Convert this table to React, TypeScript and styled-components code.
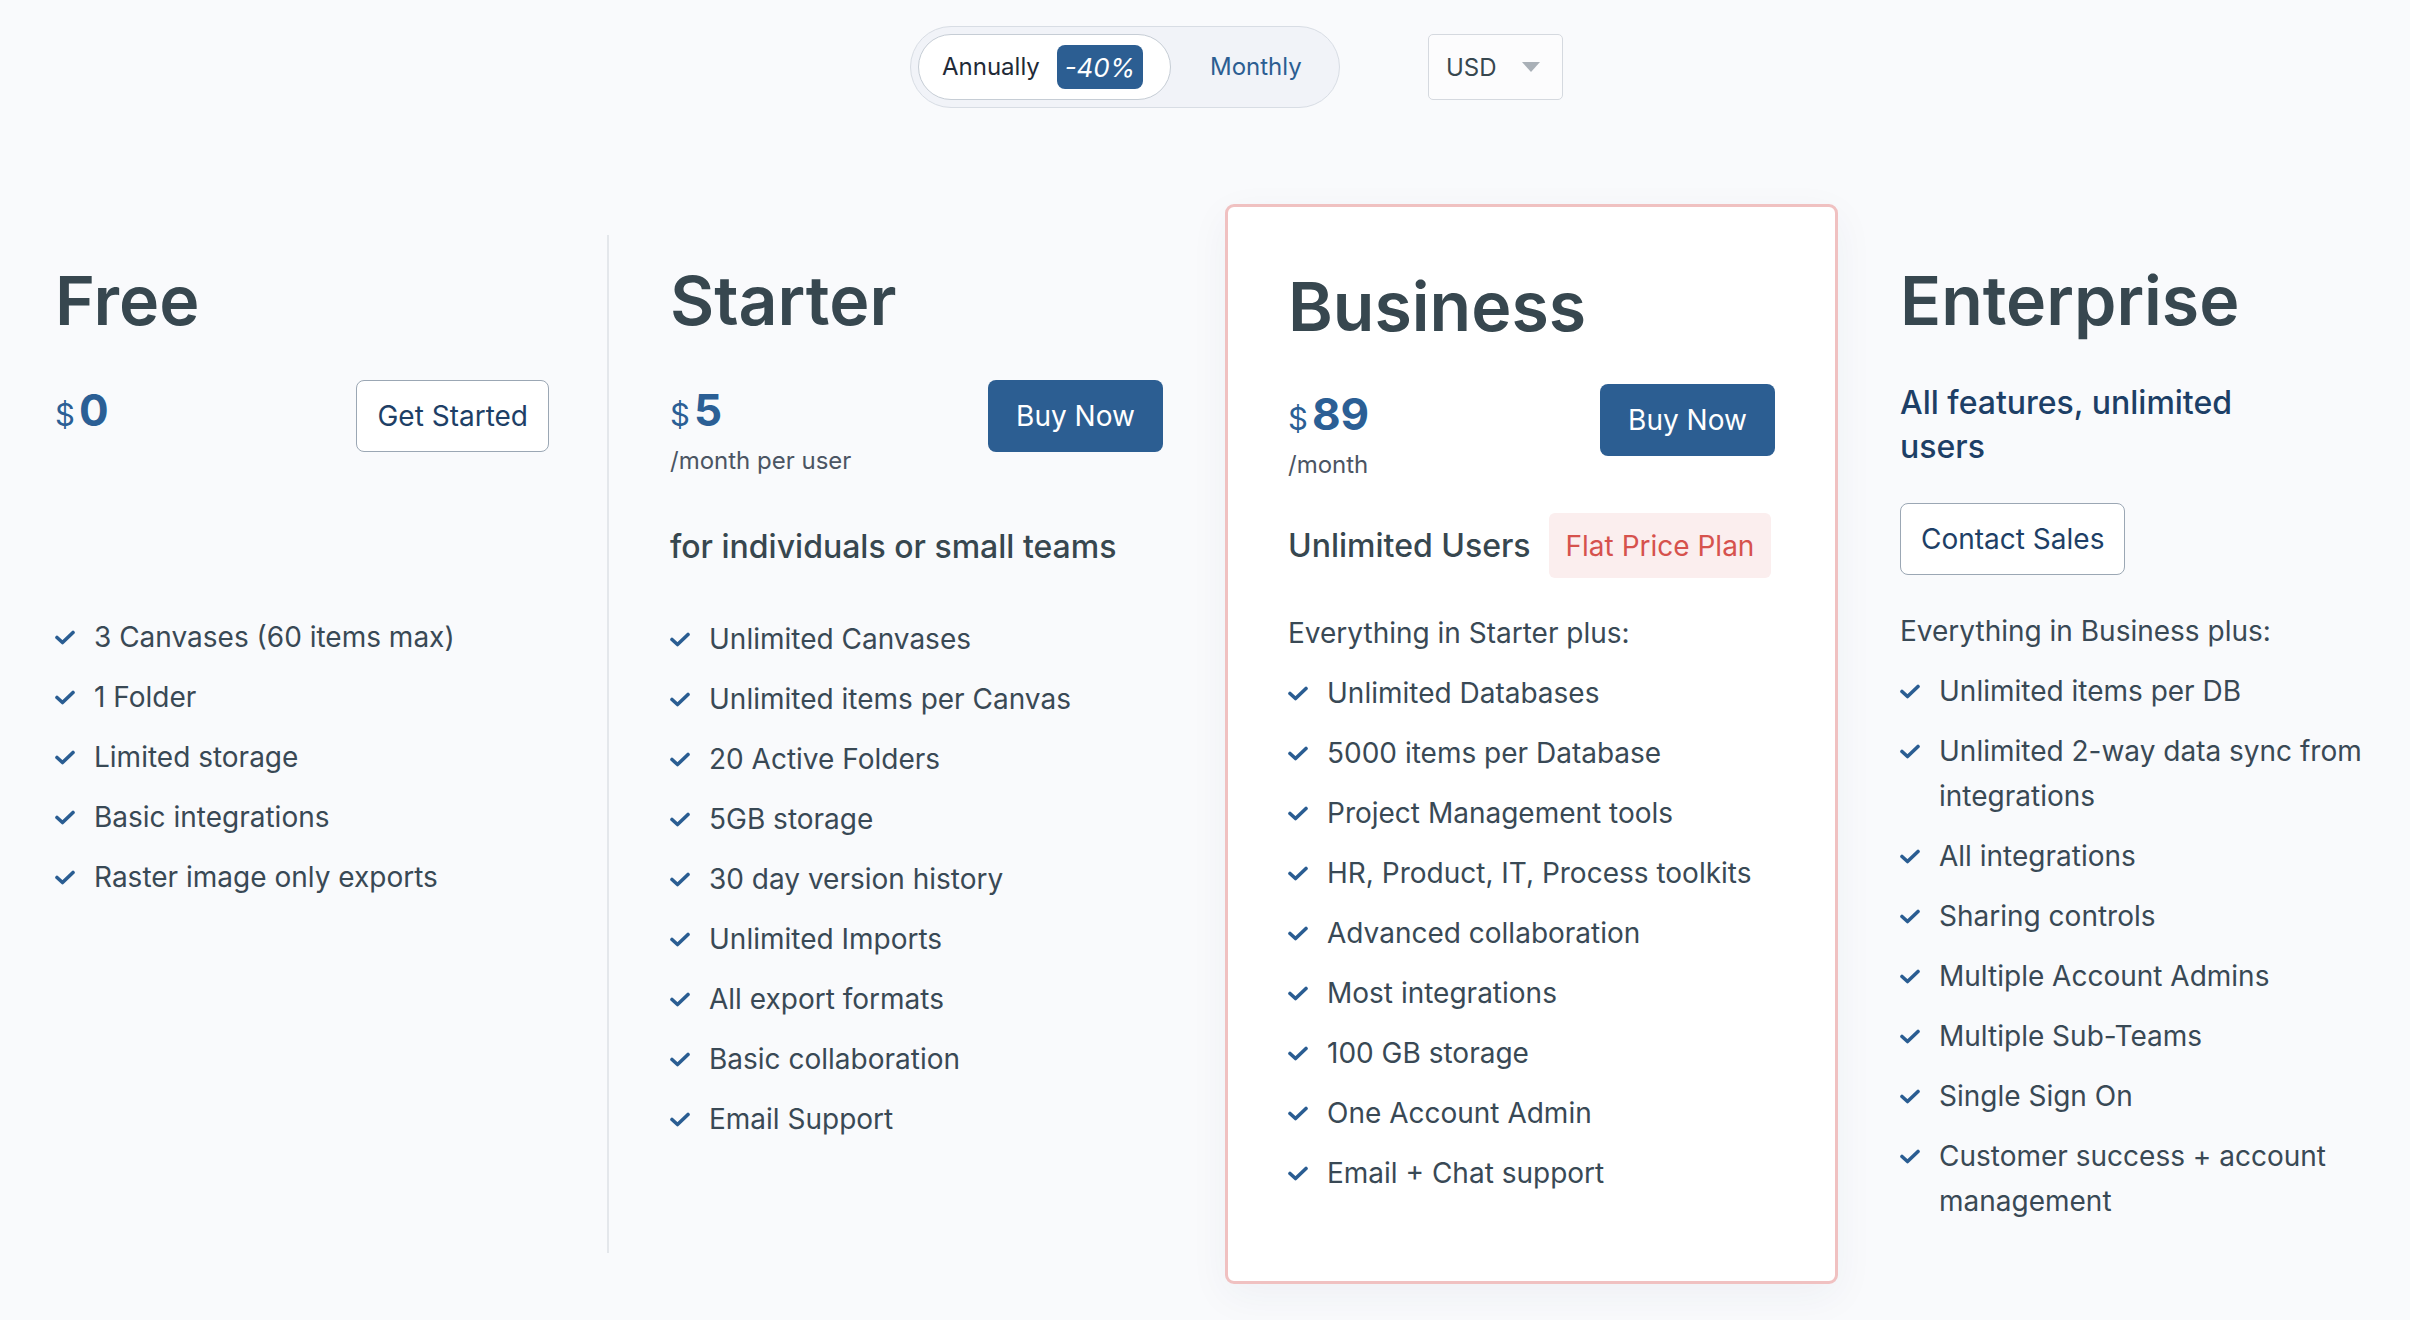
import React from "react";
import styled, { createGlobalStyle, css } from "styled-components";

const GlobalStyle = createGlobalStyle`
  * { box-sizing: border-box; }
  html, body {
    margin: 0;
    padding: 0;
    background: #f9fafc;
  }
  body {
    font-family: Inter, "Noto Sans", "Liberation Sans", sans-serif;
    color: #37474f;
  }
`;

const Page = styled.div`
  width: 2410px;
  min-height: 1320px;
  overflow: hidden;
  background: #f9fafc;
`;

const TopBar = styled.div`
  display: flex;
  justify-content: center;
  align-items: center;
  gap: 88px;
  height: 108px;
  padding: 26px 0 0 63px;
`;

const Toggle = styled.div`
  display: flex;
  align-items: center;
  width: 430px;
  height: 82px;
  padding: 7px;
  border: 1px solid #d8dde4;
  border-radius: 41px;
  background: #f1f3f8;
`;

const ActiveSegment = styled.div`
  display: flex;
  align-items: center;
  gap: 17px;
  width: 253px;
  height: 66px;
  padding-left: 23px;
  border: 1px solid #c6cdd5;
  border-radius: 33px;
  background: #ffffff;
`;

const SegmentLabel = styled.span<{ $active?: boolean }>`
  font-size: 24px;
  line-height: 1;
  color: ${(p) => (p.$active ? "#1f2a37" : "#2c5e92")};
  ${(p) =>
    !p.$active &&
    css`
      margin-left: 39px;
    `}
`;

const DiscountBadge = styled.span`
  display: inline-flex;
  align-items: center;
  justify-content: center;
  width: 86px;
  height: 44px;
  border-radius: 8px;
  background: #2c5e92;
  color: #ffffff;
  font-size: 26px;
  font-style: italic;
`;

const CurrencySelect = styled.div`
  display: flex;
  align-items: center;
  justify-content: space-between;
  width: 135px;
  height: 66px;
  padding: 0 22px 0 17px;
  border: 1px solid #d5d9df;
  border-radius: 5px;
  background: #fcfcfd;
  font-size: 24px;
  color: #37474f;
`;

const Caret = styled.span`
  width: 0;
  height: 0;
  border-left: 9px solid transparent;
  border-right: 9px solid transparent;
  border-top: 10px solid #a9b0b7;
`;

const Plans = styled.div`
  display: grid;
  grid-template-columns: 609px 616px 613px 1fr;
  min-height: 1018px;
  margin-top: 127px;
`;

const Column = styled.div<{ $pl: number; $pr: number; $divider?: boolean }>`
  display: flex;
  flex-direction: column;
  padding: 23px ${(p) => p.$pr}px 0 ${(p) => p.$pl}px;
  ${(p) =>
    p.$divider &&
    css`
      border-right: 2px solid #e4e7eb;
    `}
`;

const FeaturedCard = styled.div`
  display: flex;
  flex-direction: column;
  margin: -31px 0;
  padding: 57px 60px 0 60px;
  border: 3px solid #f0c1c1;
  border-radius: 9px;
  background: #ffffff;
  box-shadow: 0 12px 40px rgba(30, 50, 90, 0.05);
`;

const PlanTitle = styled.h2`
  margin: 0;
  font-size: 68px;
  line-height: 84px;
  font-weight: 600;
  color: #37474f;
`;

const PriceRow = styled.div<{ $mt: number }>`
  display: flex;
  justify-content: space-between;
  align-items: flex-start;
  margin-top: ${(p) => p.$mt}px;
`;

const PriceBlock = styled.div`
  display: flex;
  flex-direction: column;
`;

const Price = styled.div`
  display: flex;
  align-items: baseline;
  height: 60px;
  line-height: 60px;
  color: #2b5f95;
`;

const Currency = styled.span`
  font-size: 31px;
  font-weight: 400;
  margin-right: 4px;
`;

const Amount = styled.span`
  font-size: 44px;
  font-weight: 700;
`;

const PerUnit = styled.div`
  font-size: 24px;
  line-height: 42px;
  color: #4b5563;
`;

const Button = styled.button<{ $primary?: boolean; $mt?: number }>`
  display: inline-flex;
  align-items: center;
  justify-content: center;
  align-self: flex-start;
  min-width: 175px;
  height: 72px;
  padding: 0 20px;
  margin-top: ${(p) => p.$mt ?? 0}px;
  border-radius: 8px;
  font-family: inherit;
  font-size: 28px;
  cursor: pointer;
  ${(p) =>
    p.$primary
      ? css`
          border: none;
          background: #2c5e92;
          color: #ffffff;
        `
      : css`
          border: 1px solid #9ba7b4;
          background: #ffffff;
          color: #1e3f66;
        `}
`;

const Tagline = styled.div<{ $mt: number; $dark?: boolean }>`
  margin-top: ${(p) => p.$mt}px;
  font-size: 32px;
  font-weight: 500;
  line-height: ${(p) => (p.$dark ? 44 : 40)}px;
  color: ${(p) => (p.$dark ? "#1d3f66" : "#37474f")};
  max-width: ${(p) => (p.$dark ? "380px" : "none")};
`;

const UsersRow = styled.div`
  display: flex;
  align-items: center;
  gap: 18px;
  margin-top: 27px;
`;

const UsersLabel = styled.span`
  font-size: 32px;
  font-weight: 500;
  color: #37474f;
`;

const FlatBadge = styled.span`
  display: inline-flex;
  align-items: center;
  height: 65px;
  padding: 0 17px;
  border-radius: 6px;
  background: #fbeeee;
  color: #d6524d;
  font-size: 28px;
`;

const FeatureList = styled.ul<{ $mt: number }>`
  list-style: none;
  margin: ${(p) => p.$mt}px 0 0 0;
  padding: 0;
`;

const Intro = styled.li`
  font-size: 28px;
  line-height: 45px;
  margin-bottom: 15px;
  color: #394955;
`;

const Feature = styled.li`
  display: flex;
  align-items: flex-start;
  font-size: 28px;
  line-height: 45px;
  margin-bottom: 15px;
  color: #394955;
`;

const CheckBox = styled.span`
  display: flex;
  align-items: center;
  flex: 0 0 auto;
  height: 45px;
  width: 20px;
  margin-right: 19px;
`;

const Check = () => (
  <CheckBox>
    <svg width="20" height="15" viewBox="0 0 20 15">
      <polyline
        points="2,7.5 7.5,12.5 18,2.5"
        fill="none"
        stroke="#2a5d92"
        strokeWidth="3.6"
        strokeLinecap="round"
        strokeLinejoin="round"
      />
    </svg>
  </CheckBox>
);

const Features = ({ items, intro, mt }: { items: string[]; intro?: string; mt: number }) => (
  <FeatureList $mt={mt}>
    {intro && <Intro>{intro}</Intro>}
    {items.map((t) => (
      <Feature key={t}>
        <Check />
        <span>{t}</span>
      </Feature>
    ))}
  </FeatureList>
);

export default function App() {
  return (
    <Page>
      <GlobalStyle />
      <TopBar>
        <Toggle>
          <ActiveSegment>
            <SegmentLabel $active>Annually</SegmentLabel>
            <DiscountBadge>-40%</DiscountBadge>
          </ActiveSegment>
          <SegmentLabel>Monthly</SegmentLabel>
        </Toggle>
        <CurrencySelect>
          <span>USD</span>
          <Caret />
        </CurrencySelect>
      </TopBar>

      <Plans>
        <Column $pl={55} $pr={58} $divider>
          <PlanTitle>Free</PlanTitle>
          <PriceRow $mt={38}>
            <PriceBlock>
              <Price>
                <Currency>$</Currency>
                <Amount>0</Amount>
              </Price>
            </PriceBlock>
            <Button>Get Started</Button>
          </PriceRow>
          <Features
            mt={163}
            items={[
              "3 Canvases (60 items max)",
              "1 Folder",
              "Limited storage",
              "Basic integrations",
              "Raster image only exports",
            ]}
          />
        </Column>

        <Column $pl={61} $pr={62}>
          <PlanTitle>Starter</PlanTitle>
          <PriceRow $mt={38}>
            <PriceBlock>
              <Price>
                <Currency>$</Currency>
                <Amount>5</Amount>
              </Price>
              <PerUnit>/month per user</PerUnit>
            </PriceBlock>
            <Button $primary>Buy Now</Button>
          </PriceRow>
          <Tagline $mt={45}>for individuals or small teams</Tagline>
          <Features
            mt={50}
            items={[
              "Unlimited Canvases",
              "Unlimited items per Canvas",
              "20 Active Folders",
              "5GB storage",
              "30 day version history",
              "Unlimited Imports",
              "All export formats",
              "Basic collaboration",
              "Email Support",
            ]}
          />
        </Column>

        <FeaturedCard>
          <PlanTitle>Business</PlanTitle>
          <PriceRow $mt={36}>
            <PriceBlock>
              <Price>
                <Currency>$</Currency>
                <Amount>89</Amount>
              </Price>
              <PerUnit>/month</PerUnit>
            </PriceBlock>
            <Button $primary>Buy Now</Button>
          </PriceRow>
          <UsersRow>
            <UsersLabel>Unlimited Users</UsersLabel>
            <FlatBadge>Flat Price Plan</FlatBadge>
          </UsersRow>
          <Features
            mt={33}
            intro="Everything in Starter plus:"
            items={[
              "Unlimited Databases",
              "5000 items per Database",
              "Project Management tools",
              "HR, Product, IT, Process toolkits",
              "Advanced collaboration",
              "Most integrations",
              "100 GB storage",
              "One Account Admin",
              "Email + Chat support",
            ]}
          />
        </FeaturedCard>

        <Column $pl={62} $pr={40}>
          <PlanTitle>Enterprise</PlanTitle>
          <Tagline $mt={39} $dark>
            All features, unlimited users
          </Tagline>
          <Button $mt={34}>Contact Sales</Button>
          <Features
            mt={34}
            intro="Everything in Business plus:"
            items={[
              "Unlimited items per DB",
              "Unlimited 2-way data sync from integrations",
              "All integrations",
              "Sharing controls",
              "Multiple Account Admins",
              "Multiple Sub-Teams",
              "Single Sign On",
              "Customer success + account management",
            ]}
          />
        </Column>
      </Plans>
    </Page>
  );
}
